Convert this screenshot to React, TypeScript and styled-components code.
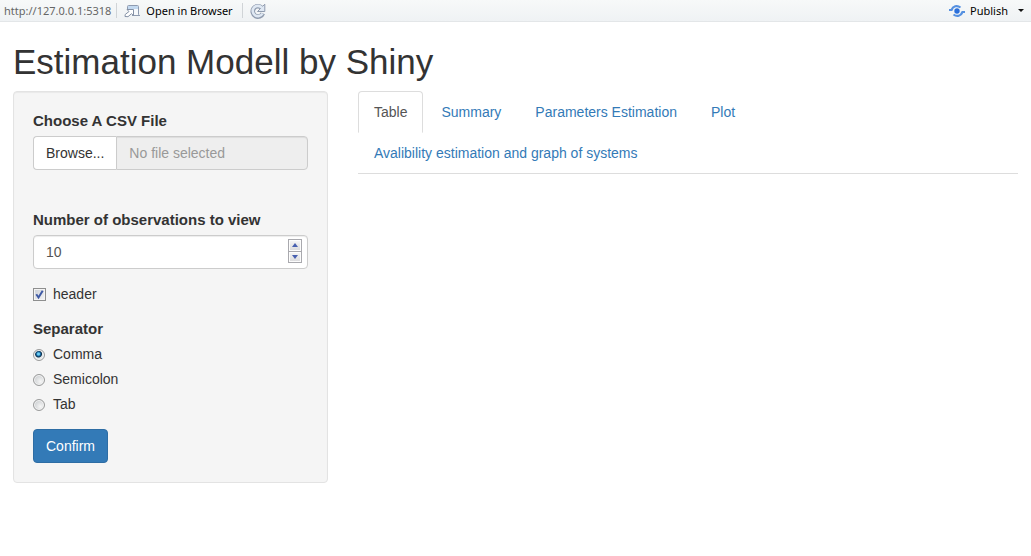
import React, { useRef, useState } from "react";
import styled, { createGlobalStyle, css } from "styled-components";

const GlobalStyle = createGlobalStyle`
  *, *::before, *::after { box-sizing: border-box; }
  body {
    margin: 0;
    background: #fff;
    color: #333;
    font: 14px/20px "Liberation Sans", Arial, sans-serif;
  }
  button, input { font: inherit; color: inherit; }
`;

const Toolbar = styled.header`
  display: flex;
  align-items: center;
  height: 22px;
  padding: 0 1px 0 4px;
  border-bottom: 1px solid #e3e6e8;
  background: linear-gradient(#f7f9f9, #eff2f4);
  font: 11px/20px "Noto Sans", "Open Sans", sans-serif;
  color: #000;
`;

const Address = styled.span`
  color: #666;
`;

const Divider = styled.span`
  width: 1px;
  height: 15px;
  margin: 0 7px 0 5px;
  background: #d0d4d7;
`;

const ToolButton = styled.button`
  display: flex;
  align-items: center;
  gap: 5px;
  height: 20px;
  padding: 0 4px 0 0;
  border: 0;
  background: none;
  white-space: nowrap;
`;

const Spacer = styled.span`
  flex: 1;
`;

const Caret = styled.span`
  margin: 0 2px 0 5px;
  border: 3px solid transparent;
  border-top-color: #111;
  border-bottom: 0;
`;

const Page = styled.main`
  padding: 20px 13px;
`;

const Title = styled.h1`
  margin: 0 0 10px;
  font-size: 35px;
  line-height: 39px;
  font-weight: 400;
`;

const Columns = styled.div`
  display: grid;
  grid-template-columns: calc((100% + 30px) / 3 - 30px) 1fr;
  gap: 30px;
  align-items: start;
`;

const Well = styled.form`
  padding: 19px;
  border: 1px solid #e3e3e3;
  border-radius: 4px;
  background: #f5f5f5;
  box-shadow: inset 0 1px 1px rgba(0, 0, 0, 0.05);
`;

const Group = styled.div<{ $gap?: number }>`
  margin-bottom: ${(p) => p.$gap ?? 15}px;
`;

const labelText = css`
  display: block;
  margin: 0 0 5px;
  padding: 0;
  font-size: 15px;
  font-weight: 700;
`;

const Label = styled.label`
  ${labelText}
`;

const RadioGroup = styled.fieldset`
  margin: 0 0 15px;
  padding: 0;
  border: 0;
`;

const Legend = styled.legend`
  ${labelText}
`;

const field = css`
  height: 34px;
  border: 1px solid #ccc;
  box-shadow: inset 0 1px 1px rgba(0, 0, 0, 0.075);
`;

const FileRow = styled.div`
  display: flex;
`;

const BrowseButton = styled.button`
  height: 34px;
  padding: 0 12px;
  border: 1px solid #ccc;
  border-right: 0;
  border-radius: 4px 0 0 4px;
  background: #fff;
`;

const FileName = styled.input`
  ${field}
  flex: 1;
  min-width: 0;
  padding: 0 12px;
  border-radius: 0 4px 4px 0;
  background: #eee;
  color: #555;
  &::placeholder { color: #999; opacity: 1; }
`;

const NumberBox = styled.div`
  ${field}
  display: flex;
  align-items: center;
  padding: 0 5px 0 12px;
  border-radius: 4px;
  background: #fff;
`;

const NumberInput = styled.input`
  flex: 1;
  min-width: 0;
  padding: 0;
  border: 0;
  outline: 0;
  background: none;
  color: #555;
  appearance: textfield;
  &::-webkit-inner-spin-button { display: none; }
`;

const Stepper = styled.div`
  display: flex;
  flex-direction: column;
  width: 14px;
  height: 24px;
  margin-bottom: 2px;
  border: 1px solid #a9a9ae;
`;

const StepButton = styled.button`
  display: flex;
  flex: 1;
  align-items: center;
  justify-content: center;
  padding: 0;
  border: 1px solid #fcfcfc;
  background: linear-gradient(#f4f4f4, #dcdcde);
  & + & { box-shadow: 0 -1px #a9a9ae; margin-top: 1px; }
`;

const Choice = styled.label`
  display: flex;
  align-items: center;
  gap: 7px;
  & + & { margin-top: 5px; }
`;

const CheckWrap = styled.span`
  display: grid;
  & > * { grid-area: 1 / 1; }
  svg { pointer-events: none; }
`;

const Checkbox = styled.input`
  appearance: none;
  width: 13px;
  height: 13px;
  margin: 0;
  border: 1px solid #8e8f8f;
  background: linear-gradient(135deg, #cbcfd5, #f6f6f6);
  box-shadow: inset 0 0 0 1px #f4f4f4;
`;

const Radio = styled.input`
  appearance: none;
  width: 12px;
  height: 12px;
  margin: 2px 1px 0 0;
  border: 1px solid #9a9b9b;
  border-radius: 50%;
  background: radial-gradient(circle at 65% 65%, #f6f6f6, #bfc3c6);
  box-shadow: inset 0 0 0 1px #f4f4f4;
  &:checked {
    background: radial-gradient(circle at 45% 40%, #6fd0f5 0 1px, #1a6fa8 2px, #0b2f4d 3px, #e4e8ea 4px);
  }
`;

const ConfirmButton = styled.button`
  height: 34px;
  padding: 0 12px;
  border: 1px solid #2e6da4;
  border-radius: 4px;
  background: #337ab7;
  color: #fff;
`;

const Tabs = styled.nav`
  display: flex;
  flex-wrap: wrap;
  border-bottom: 1px solid #ddd;
`;

const Tab = styled.a<{ $active: boolean }>`
  margin: 0 2px -1px 0;
  padding: 10px 15px;
  border: 1px solid ${(p) => (p.$active ? "#ddd" : "transparent")};
  border-bottom-color: transparent;
  border-radius: 4px 4px 0 0;
  color: ${(p) => (p.$active ? "#555" : "#337ab7")};
  text-decoration: none;
`;

const OpenIcon = () => (
  <svg width="17" height="14" viewBox="0 0 17 14" fill="none" aria-hidden="true">
    <path d="M3.500 6V2.500q0-1 1-1h9q1 0 1 1v8q0 1 1.500 1H8" fill="#f6f9fc" stroke="#8e9bb0" />
    <path d="M4 2h10v3H4z" fill="#c3d9f0" />
    <path d="M3 5.500h6.500v6L7.500 9.700l-3.500 3-3-.2.200-2 3.800-3z" fill="#fff" stroke="#8491a6" />
  </svg>
);

const RefreshIcon = () => (
  <svg width="16" height="16" viewBox="0 0 16 16" fill="none" aria-hidden="true">
    <path d="M11.500 4.600A5.200 5.200 0 1 0 12.800 10.300" stroke="#8f9bae" strokeWidth="4.600" />
    <path d="M14.800 1.200v7.300H7.500z" fill="#dfe8f3" stroke="#8f9bae" />
    <path d="M12 4.800A5.200 5.200 0 1 0 12.500 10.500" stroke="#dfe8f3" strokeWidth="2.600" />
  </svg>
);

const PublishIcon = () => (
  <svg width="16" height="14" viewBox="0 0 16 14" fill="none" aria-hidden="true">
    <circle cx="8" cy="7" r="2.700" fill="#2a6fdb" />
    <path d="M0 6h2.500C4 2 8 .8 11.500 3.500" stroke="#5590e0" strokeWidth="2.200" />
    <path d="M16 8h-2.500C12 12 8 13.200 4.500 10.500" stroke="#5590e0" strokeWidth="2.200" />
  </svg>
);

const tabs = [
  "Table",
  "Summary",
  "Parameters Estimation",
  "Plot",
  "Avalibility estimation and graph of systems",
];
const separators = ["Comma", "Semicolon", "Tab"];

export default function App() {
  const fileRef = useRef<HTMLInputElement>(null);
  const [fileName, setFileName] = useState("");
  const [count, setCount] = useState(10);
  const [header, setHeader] = useState(true);
  const [separator, setSeparator] = useState("Comma");
  const [active, setActive] = useState("Table");

  return (
    <>
      <GlobalStyle />
      <Toolbar>
        <Address>http://127.0.0.1:5318</Address>
        <Divider />
        <ToolButton type="button"><OpenIcon />Open in Browser</ToolButton>
        <Divider />
        <ToolButton type="button" aria-label="Refresh"><RefreshIcon /></ToolButton>
        <Spacer />
        <ToolButton type="button"><PublishIcon />Publish<Caret /></ToolButton>
      </Toolbar>
      <Page>
        <Title>Estimation Modell by Shiny</Title>
        <Columns>
          <Well onSubmit={(e) => e.preventDefault()}>
            <Group $gap={40}>
              <Label htmlFor="file-name">Choose A CSV File</Label>
              <FileRow>
                <BrowseButton type="button" onClick={() => fileRef.current?.click()}>Browse...</BrowseButton>
                <input
                  ref={fileRef}
                  type="file"
                  accept=".csv"
                  hidden
                  onChange={(e) => setFileName(e.target.files?.[0]?.name ?? "")}
                />
                <FileName id="file-name" type="text" readOnly placeholder="No file selected" value={fileName} />
              </FileRow>
            </Group>
            <Group>
              <Label htmlFor="obs">Number of observations to view</Label>
              <NumberBox>
                <NumberInput id="obs" type="number" value={count} onChange={(e) => setCount(Number(e.target.value))} />
                <Stepper>
                  <StepButton type="button" aria-label="Increase" onClick={() => setCount(count + 1)}>
                    <svg width="6" height="4" viewBox="0 0 6 4"><path d="M0 4L3 0l3 4z" fill="#4860b0" /></svg>
                  </StepButton>
                  <StepButton type="button" aria-label="Decrease" onClick={() => setCount(count - 1)}>
                    <svg width="6" height="4" viewBox="0 0 6 4"><path d="M0 0l3 4 3-4z" fill="#4860b0" /></svg>
                  </StepButton>
                </Stepper>
              </NumberBox>
            </Group>
            <Group>
              <Choice>
                <CheckWrap>
                  <Checkbox type="checkbox" checked={header} onChange={(e) => setHeader(e.target.checked)} />
                  {header && (
                    <svg width="13" height="13" viewBox="0 0 13 13" fill="none">
                      <path d="M3.300 6.300l2.200 3.200L9.700 2.800" stroke="#3f5aa5" strokeWidth="2" />
                    </svg>
                  )}
                </CheckWrap>
                header
              </Choice>
            </Group>
            <RadioGroup>
              <Legend>Separator</Legend>
              {separators.map((s) => (
                <Choice key={s}>
                  <Radio type="radio" name="separator" checked={separator === s} onChange={() => setSeparator(s)} />
                  {s}
                </Choice>
              ))}
            </RadioGroup>
            <ConfirmButton type="submit">Confirm</ConfirmButton>
          </Well>
          <Tabs>
            {tabs.map((t) => (
              <Tab key={t} href="#" $active={t === active} onClick={(e) => { e.preventDefault(); setActive(t); }}>
                {t}
              </Tab>
            ))}
          </Tabs>
        </Columns>
      </Page>
    </>
  );
}
